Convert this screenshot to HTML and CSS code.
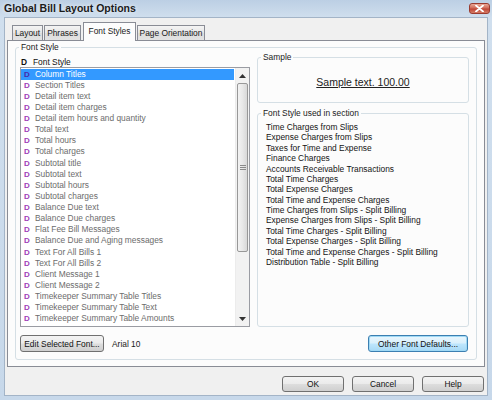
FILE: index.html
```html
<!DOCTYPE html>
<html>
<head>
<meta charset="utf-8">
<title>Global Bill Layout Options</title>
<link rel="stylesheet" href="styles.css">
</head>
<body>
<div class="window">
  <div class="titlebar">
    <span class="title">Global Bill Layout Options</span>
    <span class="close">
      <svg width="9" height="7" viewBox="0 0 9 7"><path d="M1 0.5 L8 6.5 M8 0.5 L1 6.5" stroke="#fff" stroke-width="1.8" stroke-linecap="round"/></svg>
    </span>
  </div>
  <div class="client">
    <div class="tabs">
      <div class="tab t-layout">Layout</div>
      <div class="tab t-phrases">Phrases</div>
      <div class="tab t-fonts active">Font Styles</div>
      <div class="tab t-page">Page Orientation</div>
    </div>
    <div class="panel">
      <div class="group main">
        <span class="glabel">Font Style</span>
        <div class="cols">
          <div class="left">
            <div class="list-head"><span class="hd">D</span><span>Font Style</span></div>
            <div class="list">
              <div class="rows">
                <div class="row sel"><span class="d">D</span>Column Titles</div>
                <div class="row"><span class="d">D</span>Section Titles</div>
                <div class="row"><span class="d">D</span>Detail item text</div>
                <div class="row"><span class="d">D</span>Detail item charges</div>
                <div class="row"><span class="d">D</span>Detail item hours and quantity</div>
                <div class="row"><span class="d">D</span>Total text</div>
                <div class="row"><span class="d">D</span>Total hours</div>
                <div class="row"><span class="d">D</span>Total charges</div>
                <div class="row"><span class="d">D</span>Subtotal title</div>
                <div class="row"><span class="d">D</span>Subtotal text</div>
                <div class="row"><span class="d">D</span>Subtotal hours</div>
                <div class="row"><span class="d">D</span>Subtotal charges</div>
                <div class="row"><span class="d">D</span>Balance Due text</div>
                <div class="row"><span class="d">D</span>Balance Due charges</div>
                <div class="row"><span class="d">D</span>Flat Fee Bill Messages</div>
                <div class="row"><span class="d">D</span>Balance Due and Aging messages</div>
                <div class="row"><span class="d">D</span>Text For All Bills 1</div>
                <div class="row"><span class="d">D</span>Text For All Bills 2</div>
                <div class="row"><span class="d">D</span>Client Message 1</div>
                <div class="row"><span class="d">D</span>Client Message 2</div>
                <div class="row"><span class="d">D</span>Timekeeper Summary Table Titles</div>
                <div class="row"><span class="d">D</span>Timekeeper Summary Table Text</div>
                <div class="row"><span class="d">D</span>Timekeeper Summary Table Amounts</div>
              </div>
              <div class="scrollbar">
                <div class="sb-btn">
                  <svg width="7" height="4" viewBox="0 0 7 4"><path d="M0 4 L3.5 0 L7 4 Z" fill="#333"/></svg>
                </div>
                <div class="thumb">
                  <svg width="6" height="6" viewBox="0 0 6 6"><path d="M0 0.5 H6 M0 2.5 H6 M0 4.5 H6" stroke="#8a8a8a" stroke-width="1"/></svg>
                </div>
                <div class="track"></div>
                <div class="sb-btn">
                  <svg width="7" height="4" viewBox="0 0 7 4"><path d="M0 0 L3.5 4 L7 0 Z" fill="#333"/></svg>
                </div>
              </div>
            </div>
            <div class="btnrow">
              <button class="btn edit">Edit Selected Font...</button>
              <span class="fontname">Arial 10</span>
            </div>
          </div>
          <div class="right">
            <div class="group sample">
              <span class="glabel">Sample</span>
              <div class="sample-body"><span class="sample-text">Sample text. 100.00</span></div>
            </div>
            <div class="group used">
              <span class="glabel">Font Style used in section</span>
              <div class="used-list">
                <div>Time Charges from Slips</div>
                <div>Expense Charges from Slips</div>
                <div>Taxes for Time and Expense</div>
                <div>Finance Charges</div>
                <div>Accounts Receivable Transactions</div>
                <div>Total Time Charges</div>
                <div>Total Expense Charges</div>
                <div>Total Time and Expense Charges</div>
                <div>Time Charges from Slips - Split Billing</div>
                <div>Expense Charges from Slips - Split Billing</div>
                <div>Total Time Charges - Split Billing</div>
                <div>Total Expense Charges - Split Billing</div>
                <div>Total Time and Expense Charges - Split Billing</div>
                <div>Distribution Table - Split Billing</div>
              </div>
            </div>
            <div class="btnrow end">
              <button class="btn default other">Other Font Defaults...</button>
            </div>
          </div>
        </div>
      </div>
    </div>
    <div class="dlgbtns">
      <button class="btn dlg">OK</button>
      <button class="btn dlg">Cancel</button>
      <button class="btn dlg">Help</button>
    </div>
  </div>
</div>
</body>
</html>
```
FILE: styles.css
```css
* { box-sizing: border-box; }
html, body { margin: 0; padding: 0; }
body {
  width: 492px;
  height: 400px;
  overflow: hidden;
  font-family: "Liberation Sans", Arial, sans-serif;
  font-size: 8.4px;
  color: #1a1a1a;
}
.window {
  width: 492px;
  height: 400px;
  display: flex;
  flex-direction: column;
  background: linear-gradient(#bccfe4, #d0dfee 18px, #c7d8ea 100%);
}
.titlebar {
  height: 17px;
  display: flex;
  align-items: flex-start;
  padding: 0 2px 0 4px;
}
.title {
  font-weight: bold;
  font-size: 10.5px;
  line-height: 16px;
  color: #1b1b1b;
  text-shadow: 0 0 4px rgba(255,255,255,0.8);
}
.close {
  margin-left: auto;
  margin-top: 3px;
  width: 21px;
  height: 11px;
  border: 1px solid #9a3b30;
  border-radius: 3px;
  background: linear-gradient(#e9a897, #d06a58 45%, #bf4536 55%, #d57c66);
  display: flex;
  align-items: center;
  justify-content: center;
}
.client {
  flex: 1;
  margin: 0 4px 4px 4px;
  background: #f0f0f0;
  border: 1px solid #a3b4c7;
  padding: 4px 2px 0 2px;
  display: flex;
  flex-direction: column;
}
.tabs {
  display: flex;
  align-items: flex-end;
  height: 19px;
  margin-bottom: -1px;
  padding-left: 5px;
}
.tab {
  height: 15px;
  margin-bottom: 1px;
  border: 1px solid #898c95;
  border-bottom: none;
  background: linear-gradient(#f4f4f4, #e6e6e6 50%, #dcdcdc 50%, #e3e3e3);
  text-align: center;
  line-height: 14px;
  color: #1a1a1a;
  white-space: nowrap;
}
.t-layout { width: 31px; }
.t-phrases { width: 37px; margin-left: 1px; }
.t-fonts { width: 53px; margin-left: 2px; }
.t-page { width: 68px; margin-left: 1px; }
.tab.active {
  height: 19px;
  margin-bottom: 0;
  background: #fcfcfc;
  line-height: 16px;
  position: relative;
  z-index: 1;
}
.panel {
  height: 327px;
  margin: 0;
  border: 1px solid #898c95;
  background: #fcfcfc;
  padding: 6px 7px 6px 7px;
  display: flex;
  flex-direction: column;
}
.group {
  border: 1px solid #d5dfe5;
  border-radius: 3px;
}
.glabel {
  display: block;
  width: fit-content;
  margin: -6px 0 0 3px;
  padding: 0 2px;
  background: #fcfcfc;
  line-height: 11px;
  white-space: nowrap;
}
.main {
  flex: 1;
  display: flex;
  flex-direction: column;
}
.cols {
  flex: 1;
  display: flex;
  gap: 7px;
  padding: 4px 7px 0 4px;
}
.left {
  width: 230px;
  display: flex;
  flex-direction: column;
}
.list-head {
  height: 10px;
  line-height: 10px;
  display: flex;
  padding-left: 1px;
  color: #111;
}
.hd {
  width: 12px;
  font-weight: bold;
}
.list {
  height: 260px;
  border: 1px solid #9a9ca3;
  background: #fff;
  display: flex;
}
.rows {
  flex: 1;
  padding-top: 0.5px;
  margin-right: 1px;
}
.row {
  height: 11.14px;
  line-height: 11.14px;
  padding-left: 3px;
  display: flex;
  color: #6c6c6c;
  white-space: nowrap;
}
.row .d {
  width: 11px;
  font-weight: bold;
  color: #a040b8;
  font-size: 8px;
}
.row.sel {
  background: #3399ff;
  color: #fff;
}
.row.sel .d { color: #4a2aa8; }
.scrollbar {
  width: 14px;
  display: flex;
  flex-direction: column;
  background: #f2f2f2;
  border-left: 1px solid #ececec;
}
.sb-btn {
  height: 15px;
  display: flex;
  align-items: center;
  justify-content: center;
}
.thumb {
  height: 169px;
  margin: 0 1px;
  border: 1px solid #989898;
  border-radius: 2px;
  background: linear-gradient(90deg, #f3f3f3, #e8e8e8 50%, #d8d8d8);
  display: flex;
  align-items: center;
  justify-content: center;
}
.track { flex: 1; }
.btnrow {
  margin-top: 8px;
  height: 17px;
  display: flex;
  align-items: center;
}
.btnrow.end {
  justify-content: flex-end;
  padding-right: 1px;
}
.btn {
  font-family: "Liberation Sans", Arial, sans-serif;
  font-size: 8.4px;
  color: #111;
  height: 17px;
  padding: 0;
  border: 1px solid #707070;
  border-radius: 3px;
  background: linear-gradient(#f3f3f3, #ebebeb 48%, #dddddd 52%, #cfcfcf);
  white-space: nowrap;
}
.edit { width: 84px; }
.fontname { margin-left: 8px; }
.btn.default {
  border-color: #3c7fb1;
  box-shadow: inset 0 0 0 1px #9fd9f5;
  background: linear-gradient(#eaf6fd, #d9f0fc 48%, #bee6fd 52%, #a7d9f5);
}
.other { width: 100px; }
.right {
  width: 212px;
  display: flex;
  flex-direction: column;
}
.sample {
  height: 46px;
  display: flex;
  flex-direction: column;
}
.sample-body {
  flex: 1;
  display: flex;
  align-items: center;
  justify-content: center;
  padding-bottom: 2px;
}
.sample-text {
  font-size: 10.5px;
  text-decoration: underline;
  color: #222;
}
.used {
  margin-top: 10px;
  height: 214px;
}
.used-list {
  padding: 3px 0 0 8px;
  line-height: 10.38px;
  color: #141414;
  white-space: nowrap;
}
.dlgbtns {
  margin-top: 9px;
  display: flex;
  justify-content: flex-end;
  gap: 8px;
  padding-right: 1px;
}
.btn.dlg {
  width: 62px;
  height: 16px;
}
```
